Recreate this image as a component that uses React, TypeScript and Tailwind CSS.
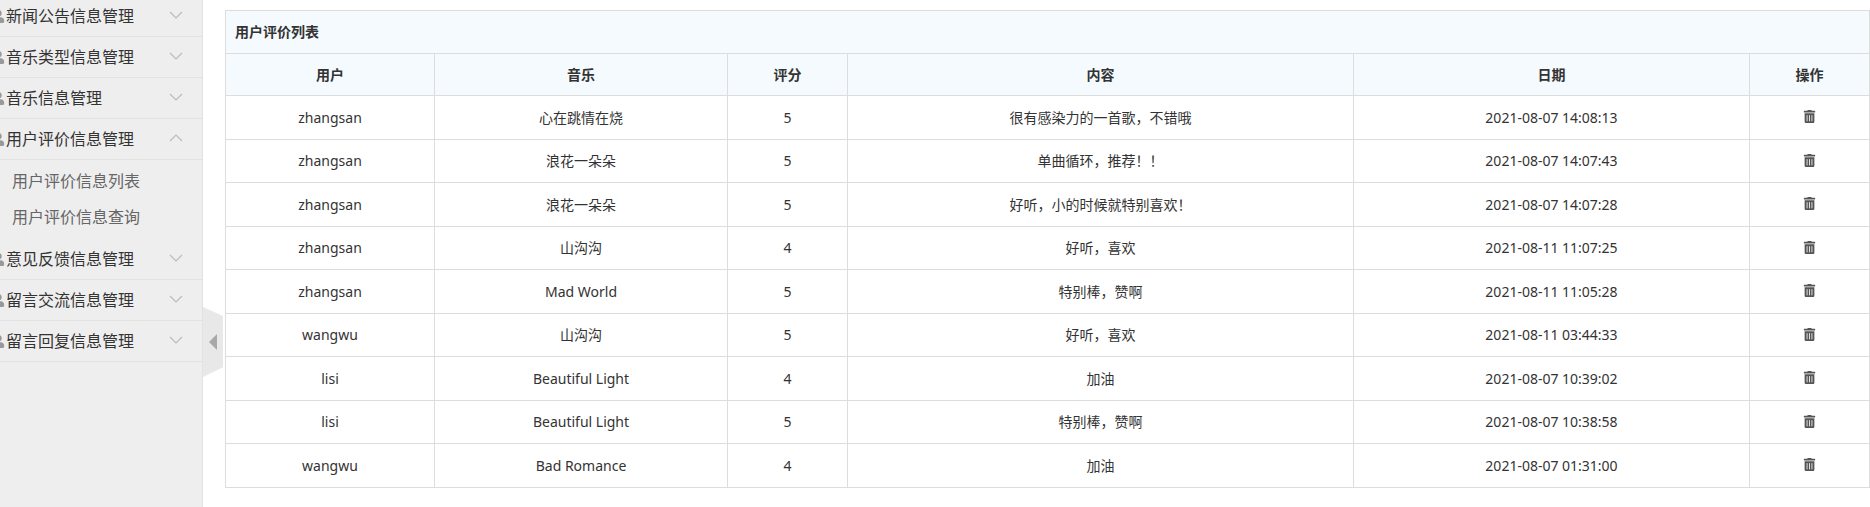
import { FaTrashAlt, FaUser } from "react-icons/fa";

const rows = [
  ["zhangsan", "心在跳情在烧", "5", "很有感染力的一首歌，不错哦", "2021-08-07 14:08:13"],
  ["zhangsan", "浪花一朵朵", "5", "单曲循环，推荐！！", "2021-08-07 14:07:43"],
  ["zhangsan", "浪花一朵朵", "5", "好听，小的时候就特别喜欢！", "2021-08-07 14:07:28"],
  ["zhangsan", "山沟沟", "4", "好听，喜欢", "2021-08-11 11:07:25"],
  ["zhangsan", "Mad World", "5", "特别棒，赞啊", "2021-08-11 11:05:28"],
  ["wangwu", "山沟沟", "5", "好听，喜欢", "2021-08-11 03:44:33"],
  ["lisi", "Beautiful Light", "4", "加油", "2021-08-07 10:39:02"],
  ["lisi", "Beautiful Light", "5", "特别棒，赞啊", "2021-08-07 10:38:58"],
  ["wangwu", "Bad Romance", "4", "加油", "2021-08-07 01:31:00"],
];

const menuTop = ["新闻公告信息管理", "音乐类型信息管理", "音乐信息管理"];
const menuBottom = ["意见反馈信息管理", "留言交流信息管理", "留言回复信息管理"];

function Chevron({ up }: { up?: boolean }) {
  return (
    <svg width="14" height="8" viewBox="0 0 14 8" fill="none" stroke="#bbb" strokeWidth="1.2" className="absolute right-[19px] top-[15px]">
      <polyline points={up ? "1,7 7,1 13,7" : "1,1 7,7 13,1"} />
    </svg>
  );
}

function MenuRow({ label, up }: { label: string; up?: boolean }) {
  return (
    <div className="relative flex h-[41px] items-center border-b border-[#e2e2e2] text-[16px] text-[#333]">
      <FaUser className="ml-[-8px] mr-px shrink-0 text-[13px] text-[#999]" />
      <span>{label}</span>
      <Chevron up={up} />
    </div>
  );
}

export default function App() {
  return (
    <div className="flex h-[507px] w-[1870px] overflow-hidden bg-white font-['Noto_Sans','Noto_Sans_CJK_SC',sans-serif]">
      <aside className="relative h-full w-[203px] shrink-0 border-r border-[#e2e2e2] bg-[#eeeeee]">
        <div className="mt-[-4px] overflow-hidden">
          {menuTop.map((m) => (
            <MenuRow key={m} label={m} />
          ))}
          <MenuRow label="用户评价信息管理" up />
          <div className="flex h-[79px] flex-col pt-[3px] text-[16px] text-[#666]">
            <div className="flex h-[36px] items-center pl-[12px]">用户评价信息列表</div>
            <div className="flex h-[35px] items-center pl-[12px]">用户评价信息查询</div>
          </div>
          {menuBottom.map((m) => (
            <MenuRow key={m} label={m} />
          ))}
        </div>
        <div className="absolute left-[203px] top-[307px] flex h-[70px] w-[20px] items-center justify-center bg-[#e8e8e8] [clip-path:polygon(0_0,100%_13%,100%_86%,0_100%)]">
          <span className="h-0 w-0 border-y-[8px] border-r-[8px] border-y-transparent border-r-[#a8a8a8]" />
        </div>
      </aside>
      <main className="flex-1 pl-[22px] pt-[10px]">
        <div className="w-[1645px] text-[14px] text-[#333]">
          <div className="flex h-[43px] items-center border border-b-0 border-[#dddddd] bg-[#f5fafe] pb-[2px] pl-[9px] font-semibold">用户评价列表</div>
          <table className="w-full table-fixed border-collapse text-center">
            <colgroup>
              <col className="w-[209px]" />
              <col className="w-[293px]" />
              <col className="w-[120px]" />
              <col className="w-[506px]" />
              <col className="w-[396px]" />
              <col />
            </colgroup>
            <thead>
              <tr className="h-[42px] bg-[#f5fafe] font-semibold">
                {["用户", "音乐", "评分", "内容", "日期", "操作"].map((h) => (
                  <th key={h} className="border border-[#dddddd] p-0 font-semibold">{h}</th>
                ))}
              </tr>
            </thead>
            <tbody>
              {rows.map((r, i) => (
                <tr key={i} className={i % 2 === 0 ? "h-[44px]" : "h-[43px]"}>
                  {r.map((c, j) => (
                    <td key={j} className={i % 2 === 0 ? "border border-[#dddddd] p-0 pb-px" : "border border-[#dddddd] p-0 pb-[2px]"}>{c}</td>
                  ))}
                  <td className="border border-[#dddddd] p-0">
                    <FaTrashAlt className="mx-auto mb-[2px] text-[13px] text-[#555]" />
                  </td>
                </tr>
              ))}
            </tbody>
          </table>
        </div>
      </main>
    </div>
  );
}
